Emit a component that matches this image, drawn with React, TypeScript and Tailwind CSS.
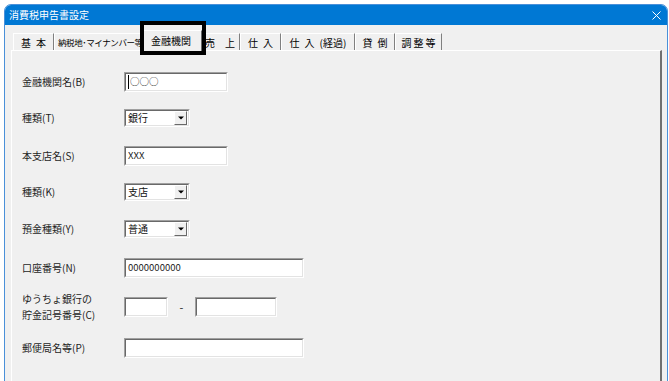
import React from 'react';

const FONT = "font-['Noto_Sans_CJK_JP','Noto_Sans',sans-serif]";

const TABS = [
  { label: '基\u2002本', w: 'w-[41px]' },
  { label: '納税地･マイナンバー等', w: 'w-[88px]', narrow: true },
  { label: '金融機関', w: 'w-[62px]', active: true },
  { label: '売\u2003上', w: 'w-[40px]' },
  { label: '仕\u2002入', w: 'w-[41px]' },
  { label: '仕\u2002入\u2002(経過)', w: 'w-[74px]' },
  { label: '貸\u2002倒', w: 'w-[40px]' },
  { label: '調\u2009整\u2009等', w: 'w-[47px]' },
];

function Sunken({ className, children }: { className: string; children?: React.ReactNode }) {
  return (
    <div className={`border border-t-[#a0a0a0] border-l-[#a0a0a0] border-r-white border-b-white ${className}`}>
      <div className="h-full w-full border border-t-[#696969] border-l-[#696969] border-r-[#e3e3e3] border-b-[#e3e3e3] bg-white">
        {children}
      </div>
    </div>
  );
}

function TextBox({ w, value, caret }: { w: string; value?: string; caret?: boolean }) {
  return (
    <Sunken className={`${w} h-[20px]`}>
      <div className="flex items-start h-full pl-[2px] pt-[1px] text-[9.5px] leading-[13px] text-[#222]">
        {caret && <span className="w-px h-[14px] bg-black mr-px" />}
        {value}
      </div>
    </Sunken>
  );
}

function Combo({ value }: { value: string }) {
  return (
    <Sunken className="w-[66px] h-[18px]">
      <div className="flex h-full items-center">
        <span className="flex-1 pl-[2px] text-[10px] leading-none text-[#111]">{value}</span>
        <div className="w-[13px] h-[14px] mr-px flex items-center justify-center bg-[#f0f0f0] border border-t-white border-l-white border-r-[#696969] border-b-[#696969]">
          <svg width="6" height="4" viewBox="0 0 6 4">
            <path d="M0 0.5h6L3 3.5z" fill="#000" />
          </svg>
        </div>
      </div>
    </Sunken>
  );
}

function Row({ label, mt, children }: { label: React.ReactNode; mt: string; children: React.ReactNode }) {
  return (
    <div className={`flex items-center ${mt}`}>
      <div className="w-[102px] text-[10px] leading-[16px] text-[#1e1e1e]">{label}</div>
      {children}
    </div>
  );
}

export default function App() {
  return (
    <div className={`relative w-[669px] h-[381px] overflow-hidden bg-white pt-[4px] pl-[4px] pr-[1px] ${FONT}`}>
      <div className="h-[400px] flex flex-col rounded-t-[7px] border border-[#4a90d9] bg-[#f0f0f0] overflow-hidden">
        {/* title bar */}
        <div className="h-[20px] shrink-0 bg-[#0078d4] flex items-center justify-between pl-[4px] pr-[6px]">
          <span className="text-white text-[10px] leading-none">消費税申告書設定</span>
          <svg width="9" height="9" viewBox="0 0 9 9">
            <path d="M0.5 0.5l8 8M8.5 0.5l-8 8" stroke="#fff" strokeWidth="1" />
          </svg>
        </div>

        <div className="flex-1 pl-[6px] pr-[5px] pt-[5px]">
          {/* tabs */}
          <div className="flex items-end h-[20px] pl-[2px] relative z-10">
            {TABS.map((t) =>
              t.active ? (
                <div
                  key={t.label}
                  className={`${t.w} h-[21px] -mb-px -mx-[2px] z-10 bg-[#f0f0f0] border-t border-l border-white border-r border-r-[#696969] flex items-center justify-center pb-[2px] text-[10px] text-black whitespace-nowrap`}
                >
                  {t.label}
                </div>
              ) : (
                <div
                  key={t.label}
                  className={`${t.w} h-[17px] overflow-hidden border-t border-l border-white border-r border-r-[#808080] flex items-center ${t.narrow ? 'justify-start pl-[3px] text-[8.5px] tracking-[-0.4px]' : 'justify-center text-[10px]'} text-black whitespace-pre`}
                >
                  {t.label}
                </div>
              )
            )}
          </div>

          {/* panel */}
          <div className="h-[340px] border-t border-l border-white border-r-2 border-r-[#707070] pl-[10px]">
            <Row label="金融機関名(B)" mt="mt-[21px]">
              <TextBox w="w-[104px]" value="○○○" caret />
            </Row>
            <Row label="種類(T)" mt="mt-[17px]">
              <Combo value="銀行" />
            </Row>
            <Row label="本支店名(S)" mt="mt-[19px]">
              <TextBox w="w-[104px]" value="XXX" />
            </Row>
            <Row label="種類(K)" mt="mt-[17px]">
              <Combo value="支店" />
            </Row>
            <Row label="預金種類(Y)" mt="mt-[19px]">
              <Combo value="普通" />
            </Row>
            <Row label="口座番号(N)" mt="mt-[20px]">
              <TextBox w="w-[180px]" value="0000000000" />
            </Row>
            <Row
              label={
                <>
                  ゆうちょ銀行の
                  <br />
                  貯金記号番号(C)
                </>
              }
              mt="mt-[13px]"
            >
              <div className="flex items-center">
                <TextBox w="w-[44px]" />
                <span className="w-[27px] text-center text-[11px] text-[#222]">-</span>
                <TextBox w="w-[82px]" />
              </div>
            </Row>
            <Row label="郵便局名等(P)" mt="mt-[15px]">
              <TextBox w="w-[180px]" />
            </Row>
          </div>
        </div>
      </div>

      {/* highlight annotation over the active tab */}
      <div className="absolute left-[140px] top-[21px] w-[66px] h-[34px] border-4 border-black z-20" />
    </div>
  );
}
